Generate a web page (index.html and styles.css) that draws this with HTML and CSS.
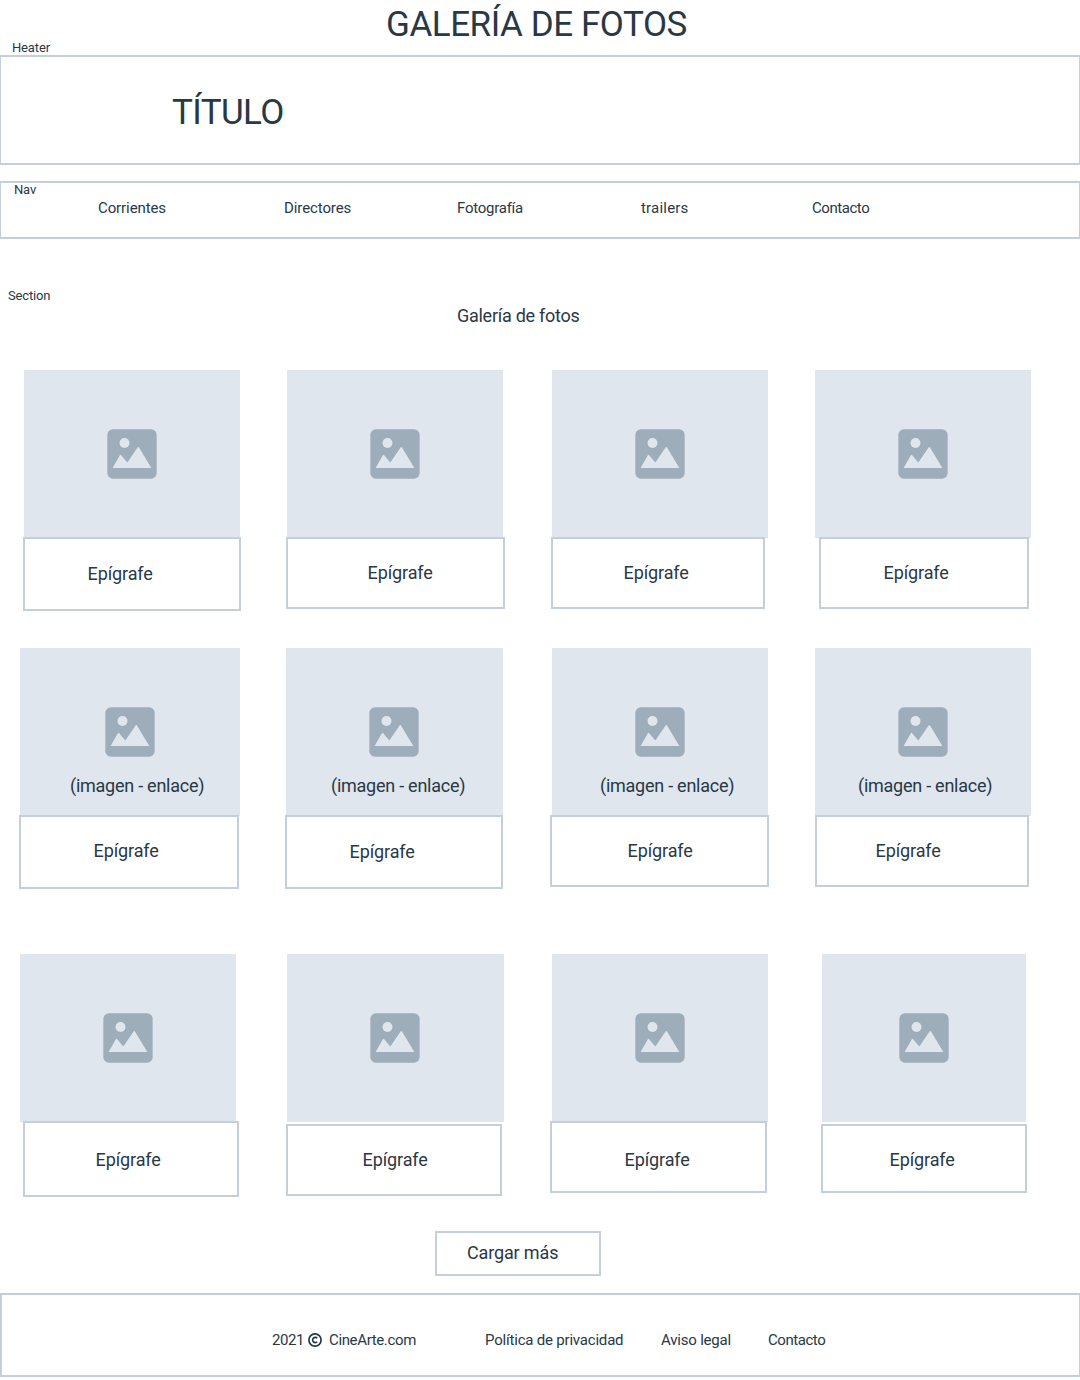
FILE: index.html
```html
<!DOCTYPE html>
<html lang="es">
<head>
<meta charset="utf-8">
<title>Galería de fotos</title>
<link rel="stylesheet" href="styles.css">
</head>
<body>
<svg class="sprite" aria-hidden="true">
  <symbol id="picture" viewBox="0 0 50 50">
    <rect class="icon-frame" x=".35" y=".35" width="49.3" height="49.3" rx="5.5"/>
    <circle class="icon-cut" cx="17.5" cy="14" r="5"/>
    <path class="icon-cut" d="M5.6 39 12.7 26.4Q13.4 25.2 14.4 26.4L20.3 33.4 30.6 18.4Q31.3 17.4 32 18.4L44.4 39Z"/>
  </symbol>
</svg>

<div class="top">
  <span class="tag tag-header">Heater</span>
  <h1 class="page-title">GALERÍA DE FOTOS</h1>
</div>

<header class="header"><p class="brand">TÍTULO</p></header>

<nav class="nav">
  <span class="tag tag-nav">Nav</span>
  <div class="nav-links">
    <a class="link corrientes">Corrientes</a>
    <a class="link directores">Directores</a>
    <a class="link fotografia">Fotografía</a>
    <a class="link trailers">trailers</a>
    <a class="link contacto">Contacto</a>
  </div>
</nav>

<section class="section">
  <span class="tag tag-section">Section</span>
  <h2 class="section-title">Galería de fotos</h2>
  <div class="gallery">
    <figure class="card c11"><div class="photo"><svg class="icon"><use href="#picture"/></svg></div><figcaption class="caption">Epígrafe</figcaption></figure>
    <figure class="card c12"><div class="photo"><svg class="icon"><use href="#picture"/></svg></div><figcaption class="caption">Epígrafe</figcaption></figure>
    <figure class="card c13"><div class="photo"><svg class="icon"><use href="#picture"/></svg></div><figcaption class="caption">Epígrafe</figcaption></figure>
    <figure class="card c14"><div class="photo"><svg class="icon"><use href="#picture"/></svg></div><figcaption class="caption">Epígrafe</figcaption></figure>

    <figure class="card c21"><div class="photo"><svg class="icon"><use href="#picture"/></svg><a class="photo-link">(imagen - enlace)</a></div><figcaption class="caption">Epígrafe</figcaption></figure>
    <figure class="card c22"><div class="photo"><svg class="icon"><use href="#picture"/></svg><a class="photo-link">(imagen - enlace)</a></div><figcaption class="caption">Epígrafe</figcaption></figure>
    <figure class="card c23"><div class="photo"><svg class="icon"><use href="#picture"/></svg><a class="photo-link">(imagen - enlace)</a></div><figcaption class="caption">Epígrafe</figcaption></figure>
    <figure class="card c24"><div class="photo"><svg class="icon"><use href="#picture"/></svg><a class="photo-link">(imagen - enlace)</a></div><figcaption class="caption">Epígrafe</figcaption></figure>

    <figure class="card c31"><div class="photo"><svg class="icon"><use href="#picture"/></svg></div><figcaption class="caption">Epígrafe</figcaption></figure>
    <figure class="card c32"><div class="photo"><svg class="icon"><use href="#picture"/></svg></div><figcaption class="caption">Epígrafe</figcaption></figure>
    <figure class="card c33"><div class="photo"><svg class="icon"><use href="#picture"/></svg></div><figcaption class="caption">Epígrafe</figcaption></figure>
    <figure class="card c34"><div class="photo"><svg class="icon"><use href="#picture"/></svg></div><figcaption class="caption">Epígrafe</figcaption></figure>
  </div>
  <button class="more">Cargar más</button>
</section>

<footer class="footer">
  <span class="link year">2021</span>
  <svg class="copy" viewBox="0 0 14 14"><circle cx="7" cy="7" r="6.1"/><path d="M9.2 8.7A2.6 2.6 0 1 1 9.2 5.3"/></svg>
  <span class="link site">CineArte.com</span>
  <a class="link privacy">Política de privacidad</a>
  <a class="link legal">Aviso legal</a>
  <a class="link footer-contact">Contacto</a>
</footer>
</body>
</html>
```
FILE: styles.css
```css
* { box-sizing: border-box; }

body {
  margin: 0;
  width: 1080px;
  height: 1380px;
  overflow: hidden;
  background: #fff;
  color: #293845;
  font-family: Roboto, "Liberation Sans", sans-serif;
  white-space: nowrap;
}

h1, h2, p, figure { margin: 0; font-weight: 400; }

.sprite { display: none; }
.icon-frame { fill: #9eadba; }
.icon-cut { fill: #dfe6ed; }

.tag { display: block; font-size: 13px; line-height: 16px; letter-spacing: -.15px; }
.link { font-size: 15px; line-height: 18px; }

.top { display: flex; height: 55px; }
.tag-header { width: 374px; margin: 40px 0 0 12px; }
.page-title { margin-top: 5px; font-size: 35px; line-height: 40px; letter-spacing: -.45px; }

.header {
  height: 110px;
  padding: 36px 0 0 171px;
  border: solid #c3cfd9;
  border-width: 2px 1px;
}
.brand { font-size: 35px; line-height: 40px; letter-spacing: -.6px; }

.nav {
  height: 58px;
  margin-top: 16px;
  border: solid #c3cfd9;
  border-width: 2px 1px;
}
.tag-nav { margin: -1px 0 0 13px; }
.nav-links { display: flex; margin-top: 1px; }
.corrientes { width: 186px; margin-left: 97px; letter-spacing: -.1px; }
.directores { width: 173px; letter-spacing: -.1px; }
.fotografia { width: 184px; letter-spacing: -.25px; }
.trailers { width: 171px; letter-spacing: .2px; }
.contacto, .footer-contact { letter-spacing: -.45px; }

.section { display: flex; flex-direction: column; padding-top: 49px; }
.tag-section { margin-left: 8px; }
.section-title { margin: 2px 0 0 457px; font-size: 18px; line-height: 20px; letter-spacing: -.27px; }

.gallery {
  display: grid;
  grid-template-columns: 266px 265px 265px 216px;
  grid-template-rows: 278px 306px 277px;
  margin: 44px 0 0 19px;
}
.photo {
  display: flex;
  flex-direction: column;
  width: var(--photo-w, 216px);
  height: 168px;
  margin-left: var(--photo-x);
  padding-top: 59px;
  background: #dfe6ed;
}
.icon { width: 50px; height: 50px; margin-left: calc((var(--photo-w, 216px) - 50px) / 2); }
.photo-link { margin: 19px 0 0 var(--link-x); font-size: 18px; line-height: 20px; letter-spacing: -.25px; }
.caption {
  position: relative;
  width: var(--cap-w);
  height: var(--cap-h, 72px);
  margin: var(--cap-gap, -1px) 0 0 var(--cap-x);
  padding: var(--text-y, 24px) 0 0 var(--text-x);
  border: 2px solid #c3cfd9;
  background: #fff;
  font-size: 18px;
  line-height: 20px;
  letter-spacing: -.1px;
}

.c11 { --photo-x: 5px; --cap-x: 4px; --cap-w: 218px; --cap-h: 74px; --text-x: 62.5px; --text-y: 25px; }
.c12 { --photo-x: 2px; --cap-x: 1px; --cap-w: 219px; --text-x: 79.5px; }
.c13 { --photo-x: 2px; --cap-x: 1px; --cap-w: 214px; --text-x: 70.5px; }
.c14 { --photo-x: 0px; --cap-x: 4px; --cap-w: 210px; --text-x: 62.5px; }

.c21 { --photo-x: 1px; --photo-w: 220px; --link-x: 50px; --cap-x: 0px; --cap-w: 220px; --cap-h: 74px; --text-x: 72.5px; }
.c22 { --photo-x: 1px; --photo-w: 217px; --link-x: 45px; --cap-x: 0px; --cap-w: 218px; --cap-h: 74px; --text-x: 62.5px; --text-y: 25px; }
.c23 { --photo-x: 2px; --link-x: 48px; --cap-x: 0px; --cap-w: 219px; --text-x: 75.5px; }
.c24 { --photo-x: 0px; --link-x: 43px; --cap-x: 0px; --cap-w: 214px; --text-x: 58.5px; }

.c31 { --photo-x: 1px; --cap-x: 4px; --cap-w: 216px; --cap-h: 76px; --text-x: 70.5px; --text-y: 27px; }
.c32 { --photo-x: 2px; --photo-w: 217px; --cap-x: 1px; --cap-w: 216px; --cap-gap: 2px; --text-x: 74.5px; }
.c33 { --photo-x: 2px; --cap-x: 0px; --cap-w: 217px; --text-x: 72.5px; --text-y: 27px; }
.c34 { --photo-x: 7px; --photo-w: 204px; --cap-x: 6px; --cap-w: 206px; --cap-h: 69px; --cap-gap: 2px; --text-x: 66.5px; }
.c22 .icon, .c32 .icon { margin-left: 83px; }

.more {
  width: 166px;
  height: 45px;
  margin-left: 435px;
  padding: 0 0 1px 30px;
  border: 2px solid #c3cfd9;
  background: #fff;
  color: inherit;
  font: 18px/20px Roboto, "Liberation Sans", sans-serif;
  letter-spacing: -.15px;
  text-align: left;
}

.footer {
  display: flex;
  height: 84px;
  margin-top: 17px;
  padding: 36px 0 0 270px;
  border: 2px solid #c3cfd9;
  border-right-width: 1px;
}
.year { width: 36px; letter-spacing: -.4px; }
.copy { width: 14px; height: 14px; margin: 2px 7px 0 0; fill: none; stroke: #293845; stroke-width: 1.7; }
.site { width: 156px; letter-spacing: -.36px; }
.privacy { width: 176px; letter-spacing: -.2px; }
.legal { width: 107px; letter-spacing: -.2px; }
```
